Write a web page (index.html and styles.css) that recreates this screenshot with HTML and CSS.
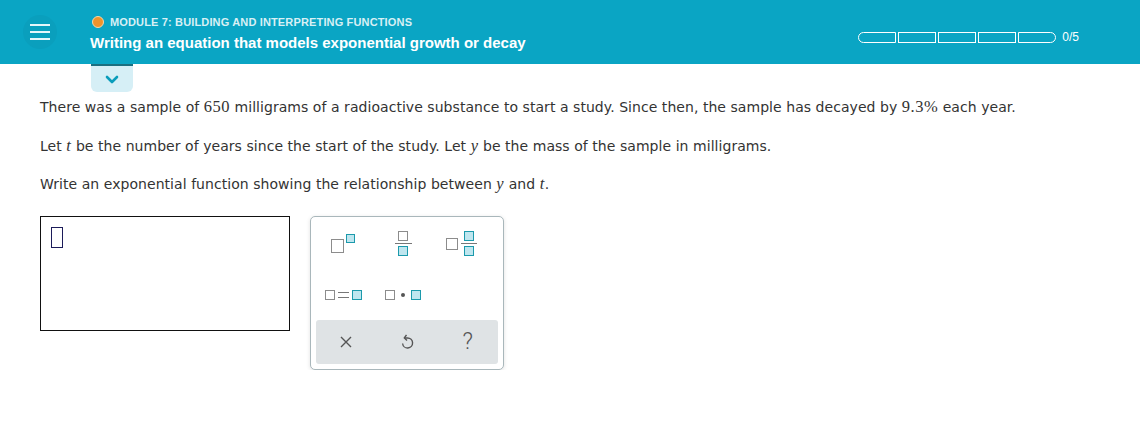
FILE: index.html
```html
<!DOCTYPE html>
<html>
<head>
<meta charset="utf-8">
<link rel="stylesheet" href="styles.css">
</head>
<body>
<header class="topbar">
  <div class="menu-btn">
    <span></span><span></span><span></span>
  </div>
  <div class="titles">
    <div class="module"><span class="dot"></span>MODULE 7: BUILDING AND INTERPRETING FUNCTIONS</div>
    <div class="title">Writing an equation that models exponential growth or decay</div>
  </div>
  <div class="progress">
    <div class="segs">
      <span class="seg first"></span><span class="seg"></span><span class="seg"></span><span class="seg"></span><span class="seg last"></span>
    </div>
    <span class="count">0/5</span>
  </div>
  <div class="tab">
    <svg width="14" height="9" viewBox="0 0 14 9"><path d="M2 2 L7 7 L12 2" fill="none" stroke="#0a9dbb" stroke-width="2.6" stroke-linecap="round" stroke-linejoin="round"/></svg>
  </div>
</header>
<main class="content">
  <p>There was a sample of <span class="m">650</span> milligrams of a radioactive substance to start a study. Since then, the sample has decayed by <span class="m">9.3%</span> each year.</p>
  <p>Let <i class="v">t</i> be the number of years since the start of the study. Let <i class="v">y</i> be the mass of the sample in milligrams.</p>
  <p>Write an exponential function showing the relationship between <i class="v">y</i> and <i class="v">t</i>.</p>
  <div class="answer-row">
    <div class="answer"><span class="cursor"></span></div>
    <div class="keypad">
      <div class="keys">
        <div class="key"><span class="ic-pow"><span class="g big"></span><span class="t sup"></span></span></div>
        <div class="key"><span class="ic-frac"><span class="g"></span><span class="bar"></span><span class="t"></span></span></div>
        <div class="key"><span class="ic-mixed"><span class="g"></span><span class="ic-frac"><span class="t"></span><span class="bar"></span><span class="t"></span></span></span></div>
        <div class="key"><span class="ic-row"><span class="g"></span><span class="eq"></span><span class="t"></span></span></div>
        <div class="key"><span class="ic-row"><span class="g"></span><span class="mdot"></span><span class="t"></span></span></div>
        <div class="key"></div>
      </div>
      <div class="actions">
        <div class="act"><svg width="14" height="14" viewBox="0 0 14 14"><path d="M2 2 L12 12 M12 2 L2 12" stroke="#555" stroke-width="1.4"/></svg></div>
        <div class="act"><svg width="14" height="18" viewBox="0 0 14 18"><path d="M5 5 H7.5 A5 5 0 1 1 2.6 10.5" fill="none" stroke="#555" stroke-width="1.4"/><path d="M6.5 1.8 L4.3 5 L7 7.6" fill="none" stroke="#555" stroke-width="1.4"/></svg></div>
        <div class="act q">?</div>
      </div>
    </div>
  </div>
</main>
</body>
</html>
```
FILE: styles.css
```css
* { box-sizing: border-box; }
body {
  margin: 0;
  background: #fff;
  font-family: "DejaVu Sans", Verdana, sans-serif;
  color: #333;
}
.topbar {
  position: relative;
  height: 64px;
  background: #0aa5c4;
  display: flex;
  align-items: center;
}
.menu-btn {
  width: 34px;
  height: 34px;
  margin-left: 23px;
  border-radius: 50%;
  background: #0a9fbd;
  display: flex;
  flex-direction: column;
  justify-content: center;
  align-items: center;
  gap: 5px;
}
.menu-btn span {
  display: block;
  width: 20px;
  height: 2px;
  background: #e6f6fa;
}
.titles {
  margin-left: 33px;
  margin-top: 3px;
  display: flex;
  flex-direction: column;
  gap: 6px;
  font-family: "Liberation Sans", Arial, sans-serif;
  font-weight: bold;
}
.module {
  display: flex;
  align-items: center;
  font-size: 11px;
  letter-spacing: 0.15px;
  color: #d8f0f5;
  padding-left: 2px;
}
.dot {
  width: 12px;
  height: 12px;
  border-radius: 50%;
  background: #f0932b;
  border: 1.5px solid #f7d8a8;
  margin-right: 6px;
}
.title {
  font-size: 15px;
  color: #fff;
}
.progress {
  margin-left: auto;
  margin-right: 61px;
  display: flex;
  align-items: center;
  gap: 6px;
  margin-top: 10px;
}
.segs { display: flex; gap: 2px; }
.seg {
  width: 38px;
  height: 11px;
  border: 1.5px solid #fff;
}
.seg.first { border-radius: 6px 0 0 6px; }
.seg.last { border-radius: 0 6px 6px 0; }
.count {
  font-family: "Liberation Sans", Arial, sans-serif;
  font-size: 12px;
  color: #fff;
}
.tab {
  position: absolute;
  left: 91px;
  top: 64px;
  width: 42px;
  height: 28px;
  background: #d6eff6;
  border-top: 2px solid #1b6f80;
  border-radius: 0 0 6px 6px;
  display: flex;
  justify-content: center;
  align-items: center;
}
.content {
  padding: 33px 40px 0;
}
.content p {
  margin: 0 0 18.5px;
  font-size: 14px;
  line-height: 20px;
  letter-spacing: 0.05px;
}
.m, .v {
  font-family: "Liberation Serif", "Times New Roman", serif;
  font-size: 16.5px;
  letter-spacing: 0.5px;
}
.answer-row {
  display: flex;
  align-items: flex-start;
  gap: 20px;
  margin-top: 21.5px;
}
.answer {
  width: 250px;
  height: 115px;
  border: 1px solid #111;
  padding: 10px;
}
.cursor {
  display: block;
  width: 12px;
  height: 21px;
  border: 1.5px solid #1c1c5a;
}
.keypad {
  width: 194px;
  border: 1px solid #a9b7bb;
  border-radius: 5px;
  box-shadow: 0 1px 4px rgba(0,0,0,0.12);
  padding: 0 5px 5px;
  background: #fff;
}
.keys {
  display: grid;
  grid-template-columns: 58px 62px 58px;
  grid-template-rows: 54px 49px;
  margin: 0 0 0 -2px;
}
.key {
  display: flex;
  justify-content: center;
  align-items: center;
}
.g, .t {
  display: block;
  border: 1.5px solid #8c8c8c;
  background: #fff;
  width: 10px;
  height: 10px;
}
.t {
  border-color: #1c9aac;
  background: #bfe6ef;
}
.ic-pow { display: flex; align-items: flex-end; }
.ic-pow .big { width: 13px; height: 14px; }
.ic-pow .sup { width: 9px; height: 9px; margin-left: 2px; margin-bottom: 10px; }
.ic-frac { display: flex; flex-direction: column; align-items: center; gap: 2px; }
.ic-frac .bar { width: 17px; height: 1.5px; background: #777; }
.ic-mixed { display: flex; align-items: center; gap: 2px; margin-left: -4px; }
.ic-mixed > .g { width: 12px; height: 12px; margin-right: 1px; }
.ic-mixed .ic-frac .bar { width: 16px; }
.ic-row { display: flex; align-items: center; gap: 1px; }
.eq {
  width: 11px;
  height: 6px;
  border-top: 1.5px solid #777;
  border-bottom: 1.5px solid #777;
  margin: 0 2px;
}
.mdot {
  width: 4px;
  height: 4px;
  border-radius: 50%;
  background: #555;
  margin: 0 5px;
}
.actions {
  display: grid;
  grid-template-columns: repeat(3, 1fr);
  height: 44px;
  background: #dfe3e5;
  border-radius: 3px;
}
.act {
  display: flex;
  justify-content: center;
  align-items: center;
}
.act.q {
  font-family: Roboto, "Liberation Sans", sans-serif;
  font-weight: 300;
  font-size: 23px;
  color: #555;
}
```
